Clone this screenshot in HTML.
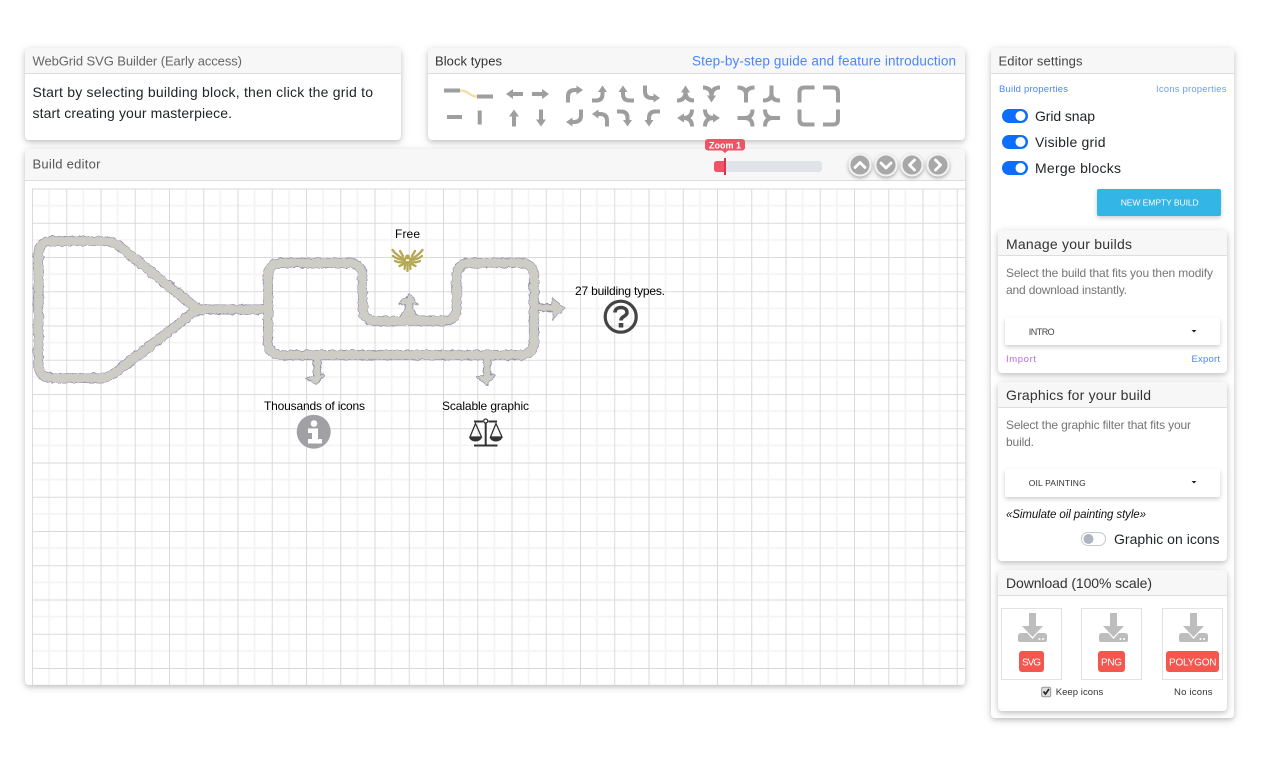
<!DOCTYPE html>
<html lang="en"><head><meta charset="utf-8"><title>WebGrid SVG Builder</title>
<style>
html,body{margin:0;padding:0;background:#fff;width:1270px;height:760px;overflow:hidden}
.c{position:absolute;background:#fff;border-radius:4px;box-shadow:0 2px 5px rgba(0,0,0,.16),0 2px 10px rgba(0,0,0,.12);overflow:hidden}
.h{background:#f7f7f7;border-bottom:1px solid #ddd;box-sizing:border-box;width:100%}
svg{position:absolute;left:0;top:0}
text{font-family:"Liberation Sans",Arial,sans-serif;font-size:14px;fill:#212529}
.g{fill:#757575;font-size:12px}
.s{font-size:9.5px}
.l{font-size:12px;fill:#000}
.b path{fill:none;stroke:#9e9e9e;stroke-width:4}
.b polygon{fill:#9e9e9e}
</style></head><body>
<div class="c" style="left:25px;top:48px;width:376px;height:92px"><div class="h" style="height:26px"></div></div>
<div class="c" style="left:428px;top:48px;width:537px;height:92px"><div class="h" style="height:26px"></div></div>
<div class="c" style="left:25px;top:149px;width:940px;height:536px"><div class="h" style="height:32px"></div></div>
<div class="c" style="left:991px;top:48px;width:243px;height:670px"><div class="h" style="height:26px"></div></div>
<div class="c" style="left:998px;top:230px;width:229px;height:143px"><div class="h" style="height:26px"></div></div>
<div class="c" style="left:998px;top:382px;width:229px;height:179px"><div class="h" style="height:26px"></div></div>
<div class="c" style="left:998px;top:570px;width:229px;height:141px"><div class="h" style="height:26px"></div></div>
<div style="position:absolute;left:1005px;top:318px;width:215px;height:27px;background:#fff;border-radius:2px;box-shadow:0 2px 5px rgba(0,0,0,.2)"></div>
<div style="position:absolute;left:1005px;top:469px;width:215px;height:28px;background:#fff;border-radius:2px;box-shadow:0 2px 5px rgba(0,0,0,.2)"></div>
<div style="position:absolute;left:1097px;top:189px;width:124px;height:27px;background:#33b5e5;border-radius:2px;box-shadow:0 2px 5px rgba(0,0,0,.2)"></div>

<svg width="1270" height="760" viewBox="0 0 1270 760">
<defs>
<pattern id="gr" x="32" y="188.500" width="34.250" height="34.250" patternUnits="userSpaceOnUse">
<path d="M17.100 0V34.250M0 17.100H34.250" stroke="#f4f4f4" stroke-width="1.800" fill="none"/>
<path d="M.5 0V34.250M0 .5H34.250" stroke="#dadada" stroke-width="1" fill="none"/>
</pattern>
<filter id="rough" filterUnits="userSpaceOnUse" x="20" y="225" width="560" height="170">
<feTurbulence type="fractalNoise" baseFrequency="0.2" numOctaves="3" seed="4"/>
<feDisplacementMap in="SourceGraphic" scale="3.5" xChannelSelector="R" yChannelSelector="G"/>
</filter>
<g id="wl">
<path d="M186 300L119 246Q112 241 103 241H52Q38.500 241 38.500 255V364Q38.500 378 52 378H100Q108 378 115 373L186 318Q192 312 200 309.500Q192 306 186 300"/>
<path d="M196 309.500H268"/>
<path d="M268 309.500V277Q268 263 282 263H348Q362.500 263 362.500 277V307Q362.500 321 377 321H442Q456.700 321 456.700 307V277Q456.700 263 471 263H520Q534 263 534 277V341Q534 355 520 355H282Q268 355 268 341V309"/>
</g>
<g id="st">
<path d="M534 303Q536 308 545 308H554"/>
<path d="M394 321Q408 321 409 303M424 321Q410 321 409 303"/>
<path d="M317 355V378M487 355V378"/>
</g>
<g id="hd">
<polygon points="399,304 409,294 418,304"/><polygon points="552,298 564,308 553,319"/>
<polygon points="306,378 316,384 324,375"/><polygon points="477,377 487,385 495,375"/>
</g>
<g id="dl">
<path d="M1018 636q0-3 3-3h23q3 0 3 3v4q0 2-2 2h-25q-2 0-2-2z" fill="#bdbdbd"/>
<path d="M1020 625L1032.500 639L1045 625" fill="#fff"/>
<path d="M1029 613h7v13h7l-10.500 11-10.500-11h7z" fill="#bdbdbd"/>
<circle cx="1039.500" cy="639" r="1" fill="#fff"/><circle cx="1043" cy="639" r="1" fill="#fff"/>
</g>
<g id="tog"><rect x="1002" y="-7" width="26" height="14" rx="7" fill="#0d6efd"/><circle cx="1020.500" cy="0" r="5" fill="#fff"/></g>
</defs>

<!-- grid -->
<rect x="32" y="188.500" width="933" height="496.500" fill="url(#gr)"/>

<!-- header texts -->
<text x="32.500" y="65.500" textLength="209.500" style="font-size:13px;fill:#666">WebGrid SVG Builder (Early access)</text>
<text x="32.500" y="97" textLength="340.500">Start by selecting building block, then click the grid to</text>
<text x="32.500" y="118" textLength="199.500">start creating your masterpiece.</text>
<text x="435" y="65.500" textLength="67" style="font-size:13px;fill:#333">Block types</text>
<text x="692" y="65.500" textLength="264" style="font-size:13.500px;fill:#4a86f7">Step-by-step guide and feature introduction</text>
<text x="32.500" y="168.500" textLength="68" style="font-size:13px;fill:#555">Build editor</text>
<text x="998.500" y="65.500" textLength="84" style="font-size:13px;fill:#444">Editor settings</text>

<!-- block icons -->
<g class="b">
<path d="M444 90.500H460M477 96.500H493"/>
<path d="M460 90.500Q465 90.500 469 93.500Q473 96.500 477 96.500" style="stroke:#f3dfa6;stroke-width:2.500"/>
<path d="M447 117H462M479.700 110.500V124.500"/>
<g transform="translate(506,85.500)"><path d="M6 8.500H17"/><polygon points="0,8.500 7,3.500 7,13.500"/></g>
<g transform="translate(532,85.500)"><path d="M0 8.500H11"/><polygon points="17,8.500 10,3.500 10,13.500"/></g>
<g transform="translate(505.500,109.500)"><path d="M8.500 6V17"/><polygon points="8.500,0 3.500,7 13.500,7"/></g>
<g transform="translate(532.500,109.500)"><path d="M8.500 0V11"/><polygon points="8.500,17 3.500,10 13.500,10"/></g>

<g transform="translate(566,85.500)"><path d="M2 17V11Q2 4.500 9 4.500H11"/><polygon points="17,4.500 10.500,0 10.500,9"/></g>
<g transform="translate(592,85.500)"><path d="M0 15H4Q10.500 15 10.500 8.500V6"/><polygon points="10.500,0 6,6.500 15,6.500"/></g>
<g transform="translate(617,85.500)"><path d="M6 6V8.500Q6 15 12.500 15H17"/><polygon points="6,0 1.500,6.500 10.500,6.500"/></g>
<g transform="translate(643,85.500)"><path d="M2 0V6Q2 12.500 9 12.500H11"/><polygon points="17,12.500 10.500,8 10.500,17"/></g>

<g transform="translate(566,109.500)"><path d="M15 0V6Q15 12.500 8 12.500H6"/><polygon points="0,12.500 6.500,8 6.500,17"/></g>
<g transform="translate(592,109.500)"><path d="M6 4.500H8Q15 4.500 15 11V17"/><polygon points="0,4.500 6.500,0 6.500,9"/></g>
<g transform="translate(617,109.500)"><path d="M0 2H4Q10.500 2 10.500 8.500V11"/><polygon points="10.500,17 6,10.500 15,10.500"/></g>
<g transform="translate(643,109.500)"><path d="M17 2H12.500Q6 2 6 8.500V11"/><polygon points="6,17 1.500,10.500 10.500,10.500"/></g>

<g transform="translate(677,85.500)"><path d="M0 15Q8.500 15 8.500 6M17 15Q8.500 15 8.500 6"/><polygon points="8.500,0 4,7 13,7"/></g>
<g transform="translate(703,85.500)"><path d="M0 2Q8.500 2 8.500 11M17 2Q8.500 2 8.500 11"/><polygon points="8.500,17 4,10 13,10"/></g>
<g transform="translate(677,109.500)"><path d="M15 0Q15 8.500 6 8.500M15 17Q15 8.500 6 8.500"/><polygon points="0,8.500 7,4 7,13"/></g>
<g transform="translate(703,109.500)"><path d="M2 0Q2 8.500 11 8.500M2 17Q2 8.500 11 8.500"/><polygon points="17,8.500 10,4 10,13"/></g>

<g transform="translate(737.500,85.500)"><path d="M0 2Q8.500 2 8.500 9V17M17 2Q8.500 2 8.500 9"/></g>
<g transform="translate(763,85.500)"><path d="M0 15Q8.500 15 8.500 8V0M17 15Q8.500 15 8.500 8"/></g>
<g transform="translate(737.500,109.500)"><path d="M0 8.500H7Q15 8.500 15 0M7 8.500Q15 8.500 15 17"/></g>
<g transform="translate(763,109.500)"><path d="M17 8.500H10Q2 8.500 2 0M10 8.500Q2 8.500 2 17"/></g>

<g transform="translate(797.500,85.500)"><path d="M2 17V7Q2 2 7 2H17"/></g>
<g transform="translate(823,85.500)"><path d="M0 2H10Q15 2 15 7V17"/></g>
<g transform="translate(797.500,109.500)"><path d="M2 0V10Q2 15 7 15H17"/></g>
<g transform="translate(823,109.500)"><path d="M0 15H10Q15 15 15 10V0"/></g>
</g>

<!-- zoom slider -->
<rect x="714" y="161" width="108" height="11" rx="3" fill="#e0e3e8"/>
<path d="M725 161H717q-3 0-3 3v5q0 3 3 3h8z" fill="#ef5366"/>
<rect x="724" y="158" width="2" height="17" fill="#d9344b"/>
<rect x="705" y="139" width="40" height="11.500" rx="3" fill="#ef5366"/>
<path d="M722 150.500h6l-3 2.500z" fill="#ef5366"/>
<text x="725" y="148.500" text-anchor="middle" style="font-size:9px;font-weight:bold;fill:#fff">Zoom 1</text>

<!-- nav buttons -->
<defs><filter id="sh" x="-30%" y="-30%" width="160%" height="170%"><feDropShadow dx="0" dy="1.500" stdDeviation="1.800" flood-opacity=".35"/></filter></defs>
<g filter="url(#sh)" fill="#a8a8a8" stroke="#f2f2f2" stroke-width="2">
<circle cx="860" cy="165" r="10.500"/><circle cx="886" cy="165" r="10.500"/><circle cx="912" cy="165" r="10.500"/><circle cx="938" cy="165" r="10.500"/>
</g>
<g fill="none" stroke="#fff" stroke-width="2.800" stroke-linecap="round" stroke-linejoin="round">
<path d="M855 167.500l5-5 5 5M881 163l5 5 5-5M914.500 160l-5 5 5 5M935.500 160l5 5-5 5"/>
</g>

<!-- road -->
<g filter="url(#rough)" stroke-linejoin="round">
<g fill="none" stroke="#8c8cab" stroke-width="10"><use href="#wl"/></g>
<g fill="none" stroke="#8c8cab" stroke-width="8"><use href="#st"/></g>
<g fill="#8c8cab" stroke="#8c8cab" stroke-width="1.500"><use href="#hd"/></g>
<g fill="none" stroke="#cdccc5" stroke-width="8.800"><use href="#wl"/></g>
<g fill="none" stroke="#cdccc5" stroke-width="6.300"><use href="#st"/></g>
<g fill="#cdccc5"><use href="#hd"/></g>
</g>

<!-- canvas labels -->
<text class="l" x="407.500" y="238" text-anchor="middle" textLength="25">Free</text>
<text class="l" x="620" y="295" text-anchor="middle" textLength="90">27 building types.</text>
<text class="l" x="314.500" y="410" text-anchor="middle" textLength="101">Thousands of icons</text>
<text class="l" x="485.500" y="410" text-anchor="middle" textLength="87">Scalable graphic</text>

<!-- bird -->
<g stroke="#b5a956" stroke-linecap="round" fill="none">
<g stroke-width="2.300">
<path d="M405 259Q398 257 392.500 250M405 260Q398 260 393 256M405 262Q399 263 395 261M405 263Q402 265 399.500 266"/>
<path d="M410 259Q417 257 422.500 250M410 260Q417 260 422 256M410 262Q416 263 420 261M410 263Q413 265 415.500 266"/>
<path d="M403 256L400 251M412 256L415 251"/>
<path d="M407.500 262V271M405.500 262L404.500 269M409.500 262L410.500 269"/>
</g>
<circle cx="407.500" cy="257" r="2.500" fill="#b5a956" stroke="none"/>
</g>

<!-- question -->
<circle cx="620.700" cy="316.700" r="15.500" fill="none" stroke="#444" stroke-width="3.200"/>
<path d="M615 312.500C615 309 618 307.500 621 307.500C624.500 307.500 627 309.500 627 312.500C627 316.500 621 316 621 320.500" fill="none" stroke="#444" stroke-width="3.600"/>
<rect x="618.700" y="323" width="4.600" height="4.500" fill="#444"/>

<!-- info -->
<circle cx="313.700" cy="431.700" r="17" fill="#a0a0a5"/>
<circle cx="314" cy="423.500" r="3.300" fill="#fff"/>
<path d="M308 428.500h10v10.500h4v4.500h-14V439h4v-6h-4z" fill="#fff"/>

<!-- scale -->
<g fill="none" stroke="#333" stroke-width="2">
<path d="M474 421.500H483M488.500 421.500H497M485.700 423V445M474 445.500H497.500"/>
<circle cx="485.700" cy="421" r="2" stroke-width="1.300"/>
<path d="M475.500 423.500L470 437H481.500ZM496 423.500L490.500 437H502Z" stroke-width="1.300"/>
</g>
<path d="M469 437.500H482Q480 441.500 475.500 441.500Q471 441.500 469 437.500ZM489.500 437.500H502.500Q500.500 441.500 496 441.500Q491.500 441.500 489.500 437.500Z" fill="#333"/>

<!-- settings -->
<text class="s" x="999" y="92" textLength="69" style="fill:#4a86f7">Build properties</text>
<text class="s" x="1156" y="92" textLength="70.500" style="fill:#6d9cf5">Icons properties</text>
<use href="#tog" y="116"/><use href="#tog" y="142"/><use href="#tog" y="168"/>
<text x="1035" y="121" textLength="60">Grid snap</text>
<text x="1035" y="147" textLength="70.500">Visible grid</text>
<text x="1035" y="173" textLength="86">Merge blocks</text>
<text x="1120.700" y="205.500" textLength="78" style="font-size:8.500px;fill:#fff">NEW EMPTY BUILD</text>

<!-- manage -->
<text x="1006" y="249" textLength="126" style="fill:#333">Manage your builds</text>
<text class="g" x="1006" y="277" textLength="207">Select the build that fits you then modify</text>
<text class="g" x="1006" y="294" textLength="121">and download instantly.</text>
<text x="1028.700" y="335" textLength="26" style="font-size:9px;fill:#444">INTRO</text>
<path d="M1191.500 330h5l-2.500 2.500z" fill="#222"/>
<text class="s" x="1006" y="362" textLength="30" style="fill:#b56bd8">Import</text>
<text class="s" x="1191.500" y="362" textLength="28.500" style="fill:#4a86f7">Export</text>

<!-- graphics -->
<text x="1006" y="400" textLength="145" style="fill:#333">Graphics for your build</text>
<text class="g" x="1006" y="429" textLength="185">Select the graphic filter that fits your</text>
<text class="g" x="1006" y="446" textLength="28">build.</text>
<text x="1028.700" y="486" textLength="57" style="font-size:8.500px;fill:#333">OIL PAINTING</text>
<path d="M1191.500 481h5l-2.500 2.500z" fill="#222"/>
<text x="1006" y="518" textLength="140" style="font-size:11.500px;font-style:italic;fill:#111">«Simulate oil painting style»</text>
<rect x="1081.500" y="532.500" width="24" height="13" rx="6.500" fill="#fff" stroke="#c4c8cc"/>
<circle cx="1088.500" cy="539" r="5" fill="#adb5bd"/>
<text x="1114" y="544" textLength="105.500">Graphic on icons</text>

<!-- download -->
<text x="1006" y="588" textLength="146" style="fill:#333">Download (100% scale)</text>
<g fill="#fff" stroke="#e2e2e2">
<rect x="1001.500" y="608.500" width="60" height="71"/>
<rect x="1081.500" y="608.500" width="60" height="71"/>
<rect x="1162.500" y="608.500" width="60" height="71"/>
</g>
<use href="#dl"/><use href="#dl" x="81"/><use href="#dl" x="161"/>
<g fill="#f5564e">
<rect x="1019" y="651" width="25" height="21" rx="3"/>
<rect x="1098" y="651" width="27" height="21" rx="3"/>
<rect x="1166" y="651" width="53" height="21" rx="3"/>
</g>
<text x="1022" y="665.500" textLength="19" style="font-size:10px;fill:#fff">SVG</text>
<text x="1101" y="665.500" textLength="21" style="font-size:10px;fill:#fff">PNG</text>
<text x="1169" y="665.500" textLength="47.500" style="font-size:10px;fill:#fff">POLYGON</text>
<rect x="1041.700" y="687.200" width="9" height="9.500" rx="1.500" fill="#ddd" stroke="#999"/>
<path d="M1043.500 691.500l2 2.500 3.500-5" fill="none" stroke="#222" stroke-width="1.700"/>
<text class="s" x="1055.700" y="695" textLength="47.500" style="fill:#333">Keep icons</text>
<text class="s" x="1174" y="695" textLength="38.500" style="fill:#333">No icons</text>
</svg>
</body></html>
